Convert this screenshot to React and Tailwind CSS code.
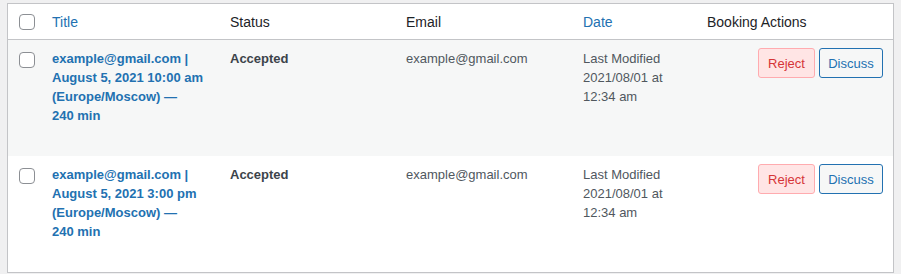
const rows = [
  { title: ['example@gmail.com |', 'August 5, 2021 10:00 am', '(Europe/Moscow) —', '240 min'], striped: true },
  { title: ['example@gmail.com |', 'August 5, 2021 3:00 pm', '(Europe/Moscow) —', '240 min'], striped: false },
];

const cols = 'grid grid-cols-[35px_177px_176px_177px_124px_1fr]';

const Checkbox = () => (
  <span className="block w-4 h-4 rounded-[4px] border border-[#8c8f94] bg-white" />
);

export default function App() {
  return (
    <div
      className="min-h-[274px] bg-[#f0f0f1] pl-[7px] pt-[3px]"
      style={{ fontFamily: '"Liberation Sans", Arial, sans-serif' }}
    >
      <div className="w-[887px] border border-[#c3c4c7] bg-white">
        {/* header */}
        <div className={`${cols} h-[36px] border-b border-[#c3c4c7] text-[14px] leading-[19.5px] text-[#1d2327]`}>
          <div className="pl-[11px] pt-[10px]"><Checkbox /></div>
          <div className="pl-[9px] pt-[9px] text-[#2271b1]">Title</div>
          <div className="pl-[10px] pt-[9px]">Status</div>
          <div className="pl-[10px] pt-[9px]">Email</div>
          <div className="pl-[10px] pt-[9px] text-[#2271b1]">Date</div>
          <div className="pl-[10px] pt-[9px]">Booking Actions</div>
        </div>

        {rows.map((r, i) => (
          <div
            key={i}
            className={`${cols} h-[116px] text-[13px] leading-[19px] text-[#50575e] ${r.striped ? 'bg-[#f6f7f7]' : 'bg-white'}`}
          >
            <div className="pl-[11px] pt-[12px]"><Checkbox /></div>
            <div className="pl-[9px] pt-[9px] font-bold text-[#2271b1] whitespace-nowrap">
              {r.title.map((l, j) => (
                <div key={j}>{l}</div>
              ))}
            </div>
            <div className="pl-[10px] pt-[9px] font-bold text-[#3c434a]">Accepted</div>
            <div className="pl-[10px] pt-[9px]">example@gmail.com</div>
            <div className="pl-[10px] pt-[9px] whitespace-nowrap">
              <div>Last Modified</div>
              <div>2021/08/01 at</div>
              <div>12:34 am</div>
            </div>
            <div className="flex justify-end gap-1 pr-[10px] pt-[8px]">
              <button className="h-[30px] w-[57px] rounded-[3px] border border-[#ffabaf] bg-[#ffe5e5] text-[13px] text-[#d63638]">
                Reject
              </button>
              <button className="h-[30px] w-[64px] rounded-[3px] border border-[#2271b1] bg-[#f6f7f7] text-[13px] text-[#2271b1]">
                Discuss
              </button>
            </div>
          </div>
        ))}
      </div>
    </div>
  );
}
